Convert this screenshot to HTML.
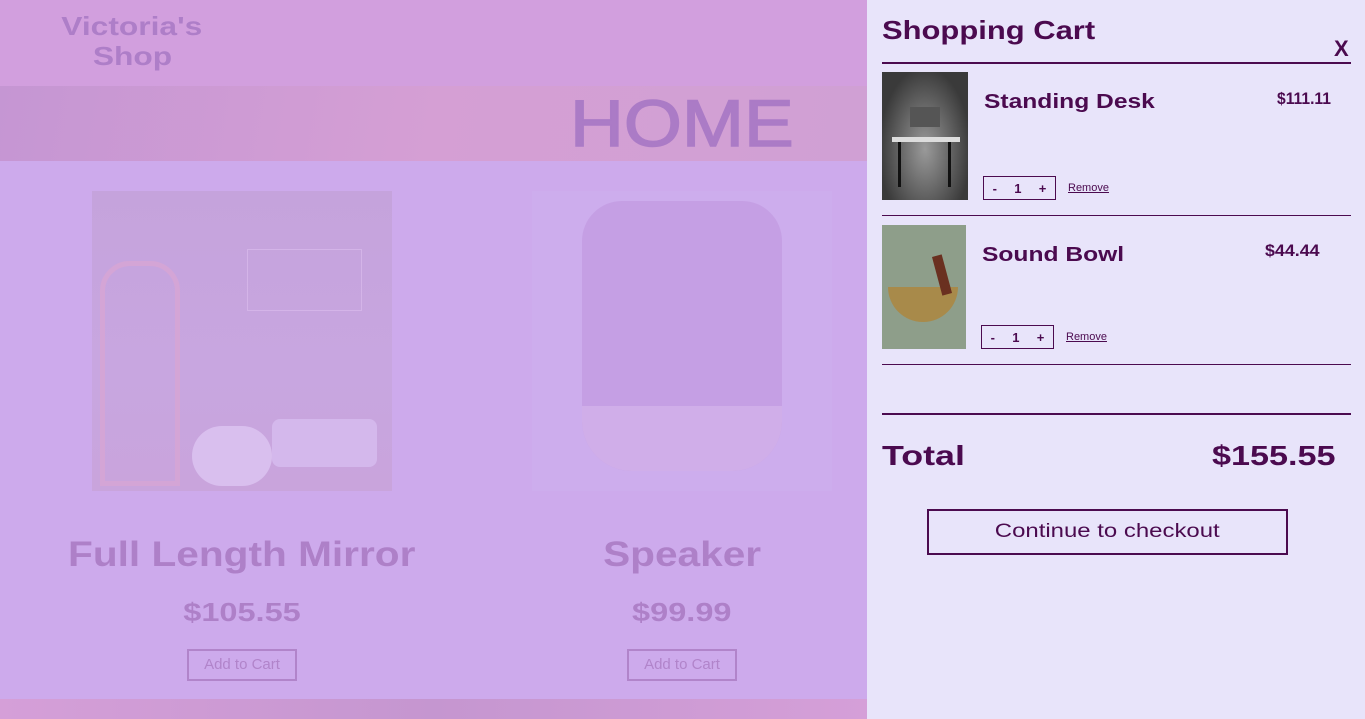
<!DOCTYPE html>
<html><head><meta charset="utf-8"><style>
*{margin:0;padding:0;box-sizing:border-box}
body{width:1365px;height:719px;overflow:hidden;font-family:"Liberation Sans",sans-serif;position:relative;background:#cdaaec}
.s{display:inline-block}
.left{position:absolute;left:0;top:0;width:867px;height:719px;background:#cdaaec}
.hdr{position:absolute;left:0;top:0;width:867px;height:86px;background:#d29fde}
.logo{position:absolute;left:40px;top:11px;width:184px;text-align:center;color:#ae7ec8;font-weight:bold;font-size:26px;line-height:30px}
.logo .s{transform:scaleX(1.22)}
.banner{position:absolute;left:0;top:86px;width:867px;height:75px;background:linear-gradient(100deg,#c596d3 0%,#d59fd4 50%,#d0a0d4 100%)}
.home{position:absolute;left:570px;top:88px;color:#ab7bc6;font-size:66px;line-height:70px;transform:scaleX(1.13);transform-origin:left;-webkit-text-stroke:1.5px #ab7bc6}
.img{position:absolute;top:191px;width:300px;height:300px}
.ptitle{position:absolute;width:440px;text-align:center;color:#ae80c8;font-weight:bold;font-size:35px;top:535px}
.ptitle .s{transform:scaleX(1.16)}
.price{position:absolute;width:440px;text-align:center;color:#ae80c8;font-weight:bold;font-size:26px;top:597px}
.price .s{transform:scaleX(1.25)}
.btn{position:absolute;top:649px;width:110px;height:32px;border:2px solid #b184ca;color:#b184ca;font-size:15px;text-align:center;line-height:28px}
.foot{position:absolute;left:0;top:699px;width:867px;height:20px;background:linear-gradient(90deg,#d59fd8,#c596d0,#d59fd8)}
.panel{position:absolute;left:867px;top:0;width:498px;height:719px;background:#e8e4fa;color:#4b0a4f}
.panel h1{position:absolute;left:15px;top:15px;font-size:26px;transform:scaleX(1.19);transform-origin:left}
.x{position:absolute;left:467px;top:36px;font-size:22px;font-weight:bold}
.line{position:absolute;left:15px;width:469px;background:#4b0a4f}
.nm{position:absolute;font-weight:bold;font-size:20px;transform:scaleX(1.23);transform-origin:left}
.pr{position:absolute;font-weight:bold;font-size:17px;transform:scaleX(0.92);transform-origin:left}
.qty{position:absolute;width:73px;height:24px;border:1.5px solid #4b0a4f;font-size:13px;display:flex;justify-content:space-around;align-items:center;font-weight:bold}
.rm{position:absolute;font-size:11px;text-decoration:underline}
</style></head><body>
<div class="left">
<div class="hdr"><div class="logo"><span class="s">Victoria's</span><br><span class="s">Shop</span></div></div>
<div class="banner"></div>
<div class="home">HOME</div>
<div class="img" style="left:92px;background:linear-gradient(180deg,#c5a3dc,#c8a6e0 60%,#c9a4dc)">
<div style="position:absolute;left:155px;top:58px;width:115px;height:62px;border:1px solid #d4b4e8"></div>
<div style="position:absolute;left:8px;top:70px;width:80px;height:225px;border:5px solid #d4a5d6;border-radius:30px 30px 0 0"></div>
<div style="position:absolute;left:180px;top:228px;width:105px;height:48px;background:#d4b8ec;border-radius:8px"></div>
<div style="position:absolute;left:100px;top:235px;width:80px;height:60px;background:#d9bfee;border-radius:30px"></div>
</div>
<div class="img" style="left:532px;background:#cdaded">
<div style="position:absolute;left:50px;top:10px;width:200px;height:270px;background:#c59fe4;border-radius:40px 40px 50px 50px"></div>
<div style="position:absolute;left:50px;top:215px;width:200px;height:65px;background:#d0aee9;border-radius:0 0 50px 50px"></div>
</div>
<div class="ptitle" style="left:22px"><span class="s">Full Length Mirror</span></div>
<div class="ptitle" style="left:462px"><span class="s">Speaker</span></div>
<div class="price" style="left:22px"><span class="s">$105.55</span></div>
<div class="price" style="left:462px"><span class="s">$99.99</span></div>
<div class="btn" style="left:187px">Add to Cart</div>
<div class="btn" style="left:627px">Add to Cart</div>
<div class="foot"></div>
</div>
<div class="panel">
<h1>Shopping Cart</h1>
<div class="x">X</div>
<div class="line" style="top:62px;height:2px"></div>
<div style="position:absolute;left:15px;top:72px;width:86px;height:128px;background:radial-gradient(ellipse at 50% 60%,#9a9a9a,#3a3a3a 75%)">
<div style="position:absolute;left:10px;top:65px;width:68px;height:5px;background:#ddd"></div>
<div style="position:absolute;left:28px;top:35px;width:30px;height:20px;background:#555"></div>
<div style="position:absolute;left:16px;top:70px;width:3px;height:45px;background:#111"></div>
<div style="position:absolute;left:66px;top:70px;width:3px;height:45px;background:#111"></div>
</div>
<div class="nm" style="left:117px;top:91px">Standing Desk</div>
<div class="pr" style="left:410px;top:89px">$111.11</div>
<div class="qty" style="left:116px;top:176px"><span>-</span><span>1</span><span>+</span></div>
<div class="rm" style="left:201px;top:182px">Remove</div>
<div class="line" style="top:215px;height:1px"></div>
<div style="position:absolute;left:15px;top:225px;width:84px;height:124px;background:#8e9e8a">
<div style="position:absolute;left:6px;top:62px;width:70px;height:35px;background:#a88a4a;border-radius:0 0 35px 35px"></div>
<div style="position:absolute;left:55px;top:30px;width:10px;height:40px;background:#6a3020;transform:rotate(-15deg)"></div>
</div>
<div class="nm" style="left:115px;top:244px">Sound Bowl</div>
<div class="pr" style="left:398px;top:241px;transform:scaleX(1.05)">$44.44</div>
<div class="qty" style="left:114px;top:325px"><span>-</span><span>1</span><span>+</span></div>
<div class="rm" style="left:199px;top:331px">Remove</div>
<div class="line" style="top:364px;height:1px"></div>
<div class="line" style="top:413px;height:2px"></div>
<div style="position:absolute;left:15px;top:440px;font-size:28px;font-weight:bold;transform:scaleX(1.28);transform-origin:left">Total</div>
<div style="position:absolute;left:345px;top:440px;font-size:28px;font-weight:bold;transform:scaleX(1.22);transform-origin:left">$155.55</div>
<div style="position:absolute;left:60px;top:509px;width:361px;height:46px;border:2px solid #4b0a4f;text-align:center;line-height:42px;font-size:19px"><span class="s" style="transform:scaleX(1.26)">Continue to checkout</span></div>
</div>
</body></html>
